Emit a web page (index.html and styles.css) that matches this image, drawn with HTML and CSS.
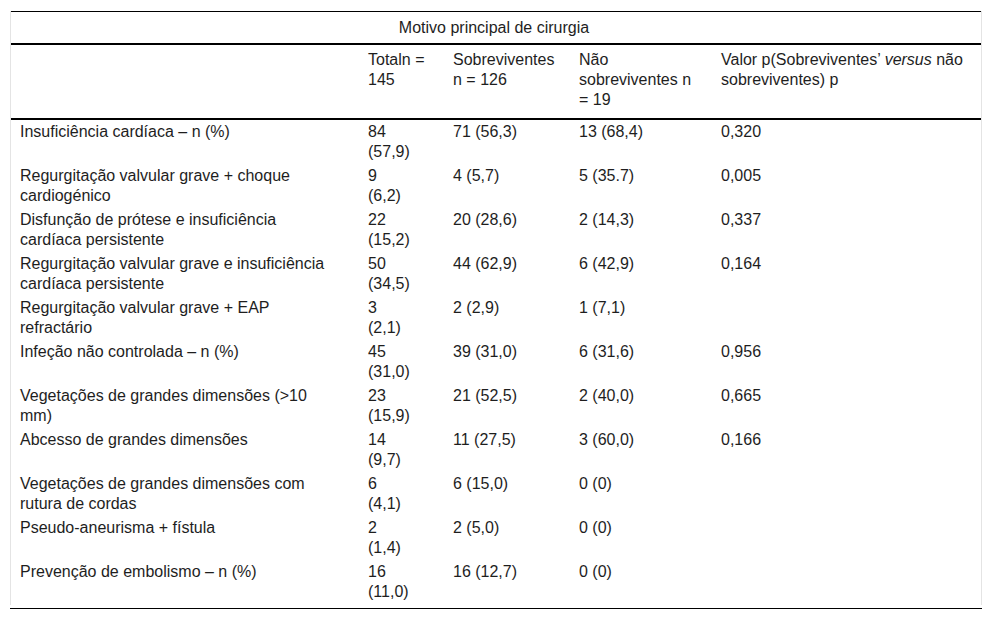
FILE: index.html
```html
<!DOCTYPE html>
<html lang="pt">
<head>
<meta charset="utf-8">
<title>Motivo principal de cirurgia</title>
<link rel="stylesheet" href="styles.css">
</head>
<body>
<div class="table-wrap">
  <table class="data">
    <colgroup>
      <col class="c1"><col class="c2"><col class="c3"><col class="c4"><col class="c5">
    </colgroup>
    <thead>
      <tr class="head-title">
        <th colspan="5">Motivo principal de cirurgia</th>
      </tr>
      <tr class="head-cols">
        <th class="first"></th>
        <th>Totaln = 145</th>
        <th>Sobreviventes n = 126</th>
        <th>Não sobreviventes n = 19</th>
        <th>Valor p(Sobreviventes’ <em>versus</em> não sobreviventes) p</th>
      </tr>
    </thead>
    <tbody>
      <tr><td class="first">Insuficiência cardíaca – n (%)</td><td>84<br>(57,9)</td><td>71 (56,3)</td><td>13 (68,4)</td><td>0,320</td></tr>
      <tr><td class="first">Regurgitação valvular grave + choque cardiogénico</td><td>9<br>(6,2)</td><td>4 (5,7)</td><td>5 (35.7)</td><td>0,005</td></tr>
      <tr><td class="first">Disfunção de prótese e insuficiência cardíaca persistente</td><td>22<br>(15,2)</td><td>20 (28,6)</td><td>2 (14,3)</td><td>0,337</td></tr>
      <tr><td class="first">Regurgitação valvular grave e insuficiência cardíaca persistente</td><td>50<br>(34,5)</td><td>44 (62,9)</td><td>6 (42,9)</td><td>0,164</td></tr>
      <tr><td class="first">Regurgitação valvular grave + EAP refractário</td><td>3<br>(2,1)</td><td>2 (2,9)</td><td>1 (7,1)</td><td></td></tr>
      <tr><td class="first">Infeção não controlada – n (%)</td><td>45<br>(31,0)</td><td>39 (31,0)</td><td>6 (31,6)</td><td>0,956</td></tr>
      <tr><td class="first">Vegetações de grandes dimensões (&gt;10 mm)</td><td>23<br>(15,9)</td><td>21 (52,5)</td><td>2 (40,0)</td><td>0,665</td></tr>
      <tr><td class="first">Abcesso de grandes dimensões</td><td>14<br>(9,7)</td><td>11 (27,5)</td><td>3 (60,0)</td><td>0,166</td></tr>
      <tr><td class="first">Vegetações de grandes dimensões com rutura de cordas</td><td>6<br>(4,1)</td><td>6 (15,0)</td><td>0 (0)</td><td></td></tr>
      <tr><td class="first">Pseudo-aneurisma + fístula</td><td>2<br>(1,4)</td><td>2 (5,0)</td><td>0 (0)</td><td></td></tr>
      <tr><td class="first">Prevenção de embolismo – n (%)</td><td>16<br>(11,0)</td><td>16 (12,7)</td><td>0 (0)</td><td></td></tr>
    </tbody>
  </table>
</div>
<div class="bottom-rule"></div>
</body>
</html>
```

FILE: styles.css
```css
html, body {
  margin: 0;
  padding: 0;
  background: #ffffff;
}

body {
  font-family: "Liberation Sans", Arial, sans-serif;
  font-size: 16px;
  line-height: 20px;
  color: #1e1e1e;
}

.table-wrap {
  margin: 11px 0 0 10px;
  width: 970px;
  border-left: 1px solid #e4e4e4;
  border-right: 1px solid #e4e4e4;
  padding-bottom: 1px;
}

.data {
  width: 970px;
  table-layout: fixed;
  border-collapse: collapse;
  border-top: 1px solid #000000;
}

.c1 { width: 347px; }
.c2 { width: 85px; }
.c3 { width: 126px; }
.c4 { width: 142px; }
.c5 { width: 270px; }

.data th,
.data td {
  padding: 2px 14px 2px 10px;
  text-align: left;
  vertical-align: top;
  font-weight: normal;
}

.data .first {
  padding-left: 9px;
  padding-right: 17px;
}

.data em {
  font-style: italic;
}

.head-title th {
  text-align: center;
  padding-top: 6px;
  padding-bottom: 5px;
  border-bottom: 2px solid #000000;
}

.head-cols th {
  padding-top: 5px;
  padding-bottom: 8px;
  border-bottom: 2px solid #000000;
}

.bottom-rule {
  margin: 3px 0 0 10px;
  width: 972px;
  border-top: 1px solid #000000;
}
```
